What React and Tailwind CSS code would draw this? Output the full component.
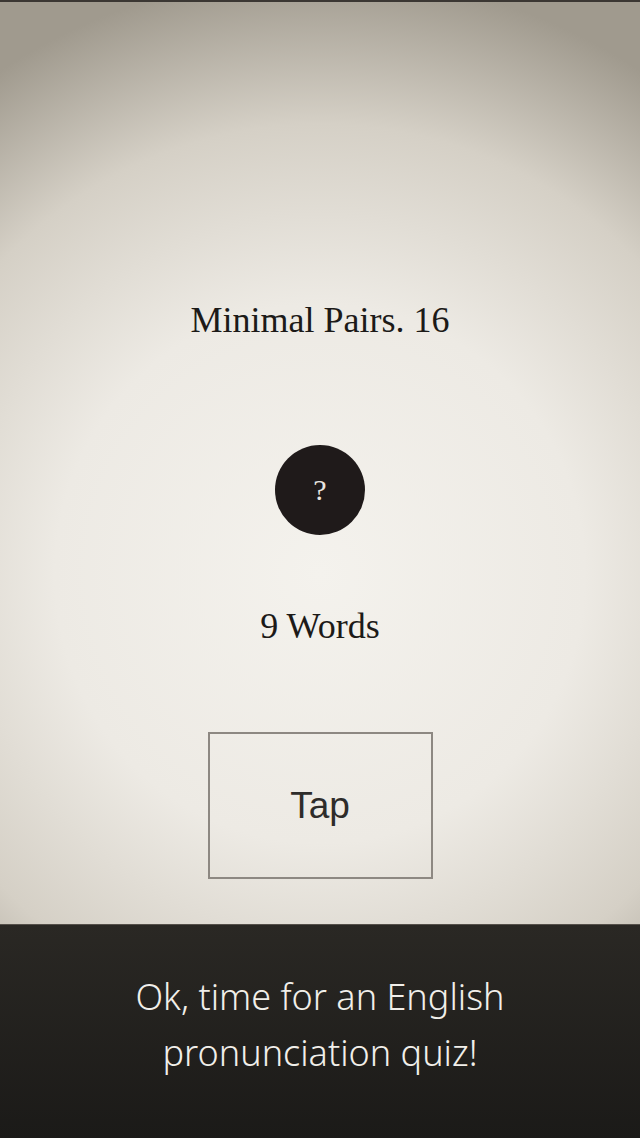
import React from 'react';

const serif = { fontFamily: '"Liberation Serif", "Times New Roman", serif' };

const App = () => {
  return (
    <div className="w-[640px] h-[1138px] flex flex-col overflow-hidden bg-[#1f1e1b]">
      {/* Quiz card area */}
      <div className="h-[924px] flex flex-col items-center border-t-2 border-[#3b3733] bg-[radial-gradient(ellipse_92%_65%_at_50%_62%,#f4f2ed_0%,#edeae4_45%,#d5d0c6_75%,#a09a8e_100%)]">
        <h1 className="pt-[300px] text-[36px] leading-[36px] text-[#1c1a18]" style={serif}>
          Minimal Pairs. 16
        </h1>
        <div className="mt-[107px] w-[90px] h-[90px] rounded-full bg-[#1f1a1a] flex items-center justify-center">
          <span className="text-[30px] leading-none text-[#e9e6e0]" style={serif}>?</span>
        </div>
        <p className="mt-[73px] text-[36px] leading-[36px] text-[#1c1a18]" style={serif}>
          9 Words
        </p>
        <button className="mt-[88px] w-[225px] h-[147px] border-2 border-[#8d8882] flex items-center justify-center text-[37px] text-[#2e2c2a] font-['Liberation_Sans',Arial,sans-serif]">
          Tap
        </button>
      </div>

      {/* Narration panel */}
      <div className="flex-1 border-t border-[#55504a] bg-gradient-to-b from-[#2a2824] to-[#1b1a18] pt-[44px] text-center">
        <p className="text-[36px] leading-[56px] font-light text-[#f1efea] font-['Noto_Sans','Open_Sans',sans-serif]">
          Ok, time for an English
          <br />
          pronunciation quiz!
        </p>
      </div>
    </div>
  );
};

export default App;
